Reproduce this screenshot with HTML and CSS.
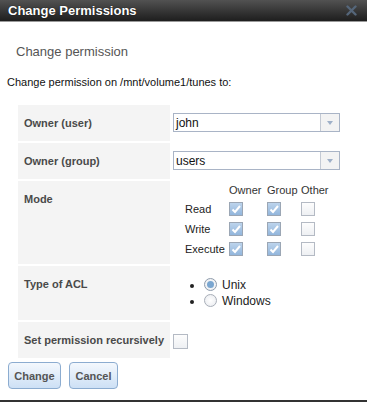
FILE: index.html
```html
<!DOCTYPE html>
<html lang="en">
<head>
    <meta charset="UTF-8">
    <title>Change Permissions</title>
    <link rel="stylesheet" href="styles.css">
</head>
<body>
    <div class="dialog">
        <div class="titlebar">
            <span class="title">Change Permissions</span>
            <svg class="close" width="11" height="11" viewBox="0 0 11 11">
                <path d="M1.5 1.5 L9.5 9.5 M9.5 1.5 L1.5 9.5" stroke="#55667a" stroke-width="2.4" stroke-linecap="round"/>
            </svg>
        </div>
        <div class="content">
            <h2 class="subtitle">Change permission</h2>
            <p class="intro">Change permission on /mnt/volume1/tunes to:</p>
            <table class="form">
                <tr class="row">
                    <td class="label">Owner (user)</td>
                    <td class="field">
                        <div class="select"><span>john</span><span class="arrow"></span></div>
                    </td>
                </tr>
                <tr class="row">
                    <td class="label">Owner (group)</td>
                    <td class="field">
                        <div class="select"><span>users</span><span class="arrow"></span></div>
                    </td>
                </tr>
                <tr class="row-mode">
                    <td class="label">Mode</td>
                    <td class="field">
                        <table class="mode">
                            <tr>
                                <th class="c-name"></th><th class="c-owner">Owner</th><th class="c-group">Group</th><th>Other</th>
                            </tr>
                            <tr>
                                <td>Read</td>
                                <td><span class="cb on"><svg viewBox="0 0 12 12"><path d="M2.5 6.5 L5 9 L10 3" /></svg></span></td>
                                <td><span class="cb on"><svg viewBox="0 0 12 12"><path d="M2.5 6.5 L5 9 L10 3" /></svg></span></td>
                                <td><span class="cb"></span></td>
                            </tr>
                            <tr>
                                <td>Write</td>
                                <td><span class="cb on"><svg viewBox="0 0 12 12"><path d="M2.5 6.5 L5 9 L10 3" /></svg></span></td>
                                <td><span class="cb on"><svg viewBox="0 0 12 12"><path d="M2.5 6.5 L5 9 L10 3" /></svg></span></td>
                                <td><span class="cb"></span></td>
                            </tr>
                            <tr>
                                <td>Execute</td>
                                <td><span class="cb on"><svg viewBox="0 0 12 12"><path d="M2.5 6.5 L5 9 L10 3" /></svg></span></td>
                                <td><span class="cb on"><svg viewBox="0 0 12 12"><path d="M2.5 6.5 L5 9 L10 3" /></svg></span></td>
                                <td><span class="cb"></span></td>
                            </tr>
                        </table>
                    </td>
                </tr>
                <tr class="row-acl">
                    <td class="label">Type of ACL</td>
                    <td class="field">
                        <ul class="acl">
                            <li><span class="radio on"></span>Unix</li>
                            <li><span class="radio"></span>Windows</li>
                        </ul>
                    </td>
                </tr>
                <tr class="row">
                    <td class="label">Set permission recursively</td>
                    <td class="field field-mid">
                        <span class="cb big"></span>
                    </td>
                </tr>
            </table>
            <div class="buttons">
                <button class="btn btn-change">Change</button>
                <button class="btn btn-cancel">Cancel</button>
            </div>
        </div>
    </div>
</body>
</html>
```

FILE: styles.css
```css
body {
    margin: 0;
    font-family: 'Liberation Sans', Arial, sans-serif;
    font-size: 11px;
    color: #222;
    background: #fff;
}
.dialog {
    width: 367px;
    height: 400px;
    border-bottom: 2px solid #333;
}
.titlebar {
    height: 21px;
    background: linear-gradient(#525252 0%, #3a3a3a 45%, #1e1e1e 100%);
    border-bottom: 1px solid #9a9a9a;
    display: flex;
    align-items: center;
    justify-content: space-between;
    padding: 0 10px 0 8px;
}
.title {
    color: #fff;
    font-weight: bold;
    font-size: 13px;
    text-shadow: 0 0 1px #000;
}
.close {
    display: block;
}
.content {
    padding: 0 0 0 7px;
}
.subtitle {
    margin: 0;
    padding: 22px 0 0 9px;
    font-size: 13px;
    font-weight: normal;
    color: #555;
    line-height: 15px;
}
.intro {
    margin: 17px 0 0 0;
    line-height: 13px;
    color: #111;
}
.form {
    border-spacing: 2px;
    margin: 14px 0 0 9px;
}
.row {
    height: 36px;
}
.row-mode {
    height: 83px;
}
.row-acl {
    height: 54px;
}
.form .label {
    width: 139px;
    background: #f4f4f4;
    font-weight: bold;
    color: #4a4a4a;
    vertical-align: top;
    padding: 12px 6px 0 6px;
    line-height: 13px;
    white-space: nowrap;
}
.form .field {
    vertical-align: top;
    padding: 8px 0 0 1px;
}
.form .field-mid {
    vertical-align: middle;
    padding-top: 0;
}
.select {
    width: 165px;
    height: 17px;
    border: 1px solid #a9b4c6;
    display: flex;
    align-items: center;
    justify-content: space-between;
    font-size: 12px;
    color: #111;
    background: #fff;
}
.select span:first-child {
    padding-left: 2px;
}
.arrow {
    width: 18px;
    height: 17px;
    border-left: 1px solid #c4cad4;
    background: #f3f3f3;
    position: relative;
}
.arrow::after {
    content: "";
    position: absolute;
    left: 6px;
    top: 7px;
    border-left: 3px solid transparent;
    border-right: 3px solid transparent;
    border-top: 4px solid #9fb0c8;
}
.mode {
    border-collapse: collapse;
    margin: -8px 0 0 12px;
}
.mode th {
    font-weight: normal;
    color: #333;
    padding: 0;
    height: 18px;
    text-align: left;
}
.mode .c-name {
    width: 44px;
}
.mode .c-owner {
    width: 38px;
}
.mode .c-group {
    width: 34px;
}
.mode td {
    height: 20px;
    padding: 0;
    text-align: left;
    color: #222;
    white-space: nowrap;
}
.cb {
    display: inline-block;
    width: 12px;
    height: 12px;
    border: 1px solid #b4bac4;
    background: linear-gradient(#fdfdfd, #eef0f3);
    vertical-align: middle;
    position: relative;
}
.cb.on {
    border-color: #9ba6b4;
    background: linear-gradient(#bcd4ec, #92b6dc);
}
.cb svg {
    position: absolute;
    left: 0;
    top: 0;
    width: 12px;
    height: 12px;
    fill: none;
    stroke: #fff;
    stroke-width: 2;
}
.cb.big {
    width: 13px;
    height: 13px;
    margin-top: 2px;
}
.acl {
    margin: 3px 0 0 0;
    padding: 0 0 0 31px;
    list-style: disc;
}
.acl li {
    line-height: 16px;
    font-size: 12px;
    color: #222;
}
.radio {
    display: inline-block;
    width: 11px;
    height: 11px;
    border: 1px solid #a8aeb8;
    border-radius: 50%;
    background: radial-gradient(#fff, #e8eaee);
    vertical-align: -2px;
    margin: 0 5px 0 0;
    position: relative;
}
.radio.on {
    border-color: #8f9cac;
}
.radio.on::after {
    content: "";
    position: absolute;
    left: 2px;
    top: 2px;
    width: 7px;
    height: 7px;
    border-radius: 50%;
    background: #7aa6d0;
}
.buttons {
    display: flex;
    gap: 8px;
    margin: 2px 0 0 1px;
}
.btn {
    font-family: 'Liberation Sans', Arial, sans-serif;
    font-size: 11px;
    font-weight: bold;
    color: #555;
    height: 27px;
    border: 1px solid #8cacd0;
    border-radius: 4px;
    background: linear-gradient(#f4f8fd, #cde0f5);
    padding: 0;
}
.btn-change {
    width: 53px;
}
.btn-cancel {
    width: 49px;
}
```
